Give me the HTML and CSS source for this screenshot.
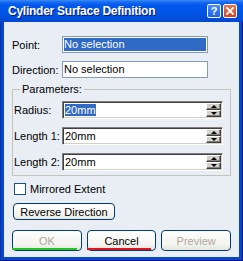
FILE: index.html
```html
<!DOCTYPE html>
<html>
<head>
<meta charset="utf-8">
<link rel="stylesheet" href="styles.css">
</head>
<body>
<div class="window">
  <div class="titlebar">
    <span class="title">Cylinder Surface Definition</span>
    <span class="tbtn help">?</span>
    <span class="tbtn close"><svg width="8" height="8" viewBox="0 0 8 8"><path d="M1 1L7 7M7 1L1 7" stroke="#fff" stroke-width="1.8" stroke-linecap="square"/></svg></span>
  </div>
  <div class="client">
    <div class="row"><span class="lbl">Point:</span><span class="sel active">No selection</span></div>
    <div class="row"><span class="lbl">Direction:</span><span class="sel">No selection</span></div>
    <fieldset class="params">
      <legend>Parameters:</legend>
      <div class="prow"><span class="plbl">Radius:</span><div class="spin"><span class="val"><span class="hl">20mm</span></span><span class="arrows"><span class="arr"><i class="up"></i></span><span class="arr"><i class="dn"></i></span></span></div></div>
      <div class="prow"><span class="plbl">Length 1:</span><div class="spin"><span class="val">20mm</span><span class="arrows"><span class="arr"><i class="up"></i></span><span class="arr"><i class="dn"></i></span></span></div></div>
      <div class="prow"><span class="plbl">Length 2:</span><div class="spin"><span class="val">20mm</span><span class="arrows"><span class="arr"><i class="up"></i></span><span class="arr"><i class="dn"></i></span></span></div></div>
    </fieldset>
    <div class="check"><span class="box"></span><span>Mirrored Extent</span></div>
    <button class="btn rev">Reverse Direction</button>
    <div class="actions">
      <button class="btn act ok" disabled>OK</button>
      <button class="btn act cancel">Cancel</button>
      <button class="btn act preview" disabled>Preview</button>
    </div>
  </div>
</div>
</body>
</html>
```

FILE: styles.css
```css
* { box-sizing: border-box; }
html, body { margin: 0; padding: 0; }
body {
  width: 243px;
  height: 261px;
  overflow: hidden;
  font-family: "Liberation Sans", Arial, sans-serif;
  font-size: 11px;
  color: #000;
}
.window {
  width: 243px;
  height: 261px;
  display: flex;
  flex-direction: column;
  background: #0847c8;
  box-shadow: inset 1px 0 0 #0831a8, inset -1px 0 0 #00138c, inset 0 -1px 0 #00138c;
}
.titlebar {
  height: 22px;
  flex: none;
  display: flex;
  align-items: center;
  padding: 0 6px 0 8px;
  background: linear-gradient(to bottom, #3b8df6 0, #1a6cf0 2px, #0058ec 5px, #0055e6 50%, #0050dc 80%, #0345cf 100%);
}
.title {
  flex: 1;
  color: #fff;
  font-weight: bold;
  font-size: 12px;
  letter-spacing: -0.25px;
  text-shadow: 1px 1px 0 #0a1883;
  white-space: nowrap;
}
.tbtn {
  width: 14px;
  height: 14px;
  margin-left: 2px;
  border: 1px solid #fff;
  border-radius: 2px;
  display: flex;
  align-items: center;
  justify-content: center;
  color: #fff;
  font-weight: bold;
  font-size: 11px;
  line-height: 1;
}
.help { background: linear-gradient(#4a8df8, #2261e6); }
.close { background: linear-gradient(#e9784f, #d44322); }
.client {
  flex: 1;
  margin: 0 4px 4px;
  background: #e9eef4;
  padding: 14px 8px 0;
  display: flex;
  flex-direction: column;
}
.row {
  display: flex;
  align-items: center;
  height: 17px;
}
.row + .row { margin-top: 8px; }
.lbl { width: 50px; }
.sel {
  width: 146px;
  height: 17px;
  border: 1px solid #7f9db9;
  background: #fff;
  padding-left: 1px;
  line-height: 15px;
}
.sel.active {
  background: #316ac5;
  color: #fff;
  box-shadow: inset 0 0 0 1px #fff;
  padding-left: 1px;
}
.params {
  margin: 5px 0 0;
  width: 219px;
  border: 1px solid #c4c4bc;
  padding: 5px 7px 4px 1px;
  min-width: 0;
}
.params legend {
  margin-left: 6px;
  padding: 0 2px;
  line-height: 13px;
  font-size: 11px;
}
.prow {
  display: flex;
  align-items: center;
  height: 18px;
}
.prow + .prow { margin-top: 8px; }
.plbl { width: 48px; white-space: nowrap; }
.spin {
  width: 161px;
  height: 18px;
  display: flex;
  background: #fff;
  border: 1px solid;
  border-color: #808080 #fff #fff #808080;
  box-shadow: inset 1px 1px 0 #404040, inset -1px -1px 0 #d4d0c8;
  padding: 1px;
}
.val {
  flex: 1;
  padding-left: 1px;
  line-height: 14px;
}
.hl { background: #316ac5; color: #fff; }
.arrows {
  width: 15px;
  display: flex;
  flex-direction: column;
}
.arr {
  flex: 1;
  background: #d4d0c8;
  border: 1px solid;
  border-color: #fff #404040 #404040 #fff;
  box-shadow: inset -1px -1px 0 #808080;
  display: flex;
  align-items: center;
  justify-content: center;
}
.arr i { display: block; width: 0; height: 0; border-left: 3px solid transparent; border-right: 3px solid transparent; }
.arr .up { border-bottom: 3px solid #000; }
.arr .dn { border-top: 3px solid #000; }
.check {
  margin-top: 7px;
  display: flex;
  align-items: center;
  height: 12px;
}
.box {
  width: 12px;
  height: 12px;
  margin: 0 4px 0 2px;
  border: 1px solid #1c5180;
  background: #fff;
}
.btn {
  font-family: "Liberation Sans", Arial, sans-serif;
  font-size: 11px;
  color: #000;
  border: 1px solid #003c74;
  border-radius: 4px;
  background: linear-gradient(#ffffff, #f4f4f0 70%, #e6e5de);
  padding: 0;
  position: relative;
}
.btn:disabled { color: #aca899; }
.rev {
  margin-top: 8px;
  margin-left: 1px;
  width: 102px;
  height: 17px;
  align-self: flex-start;
}
.actions {
  margin-top: 10px;
  display: flex;
  gap: 5px;
}
.act { width: 70px; height: 21px; }
.ok::after, .cancel::after {
  content: "";
  position: absolute;
  left: -1px;
  right: 4px;
  bottom: 0;
  height: 2px;
}
.ok::after { background: #22c322; }
.cancel::after { background: #e2141e; }
```
